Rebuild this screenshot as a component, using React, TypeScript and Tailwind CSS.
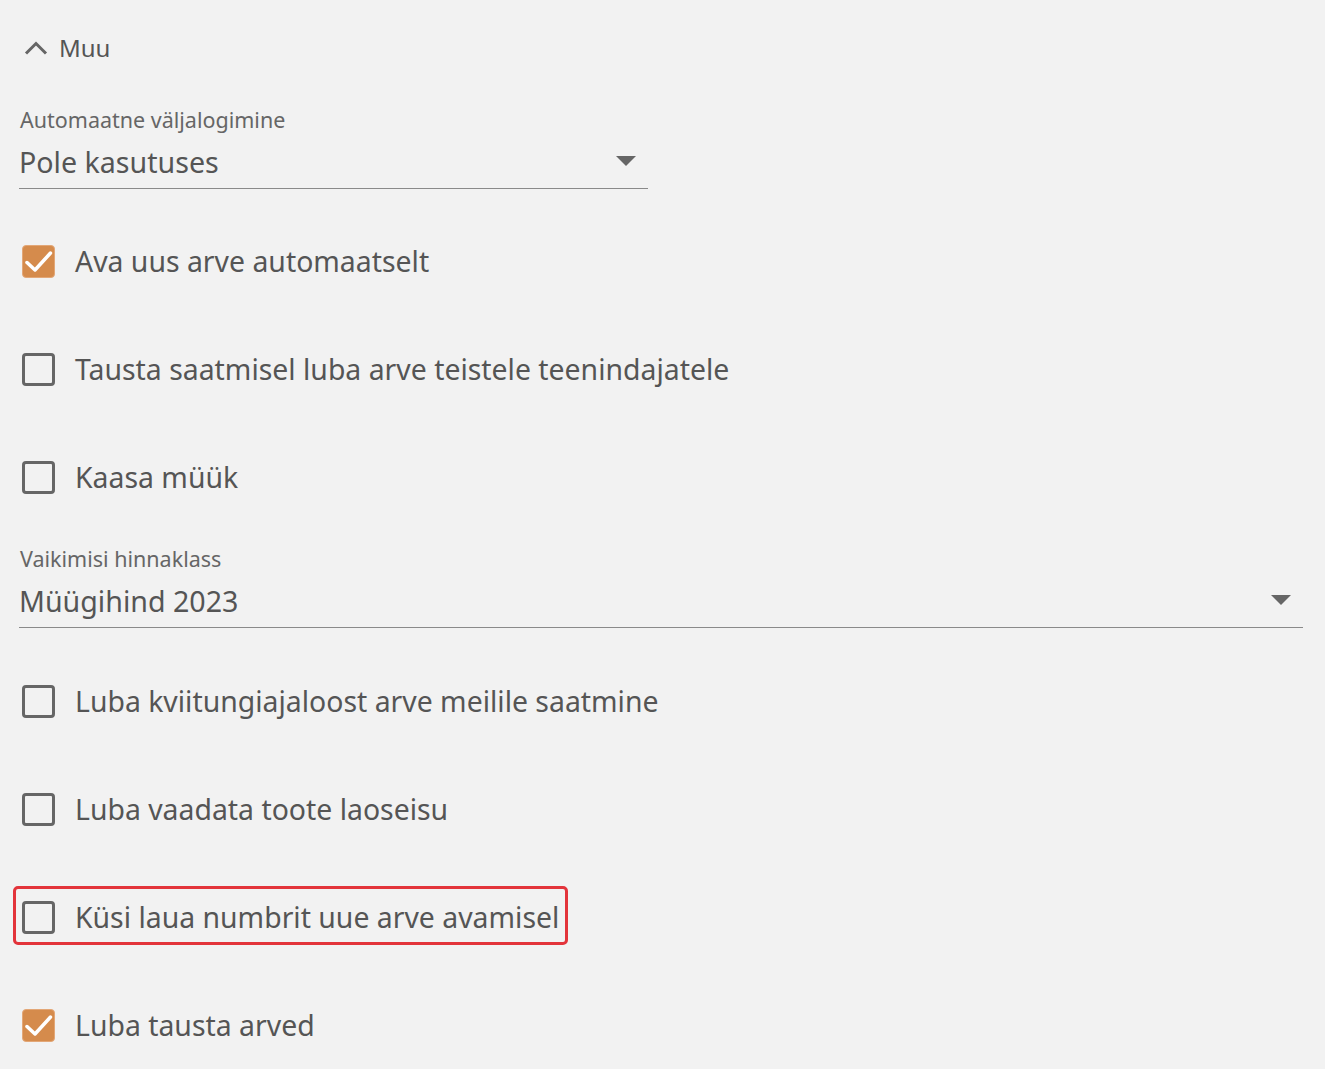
import React from "react";

const font = { fontFamily: '"Noto Sans", "Open Sans", sans-serif' };

function Checkbox({ checked }: { checked: boolean }) {
  if (checked) {
    return (
      <div className="w-[33px] h-[33px] rounded-[4px] bg-[#d58b4c] border border-[#e3a777] shrink-0">
        <svg width="33" height="33" viewBox="0 0 33 33" fill="none" className="-m-px">
          <path d="M5 17.5l8 7.5L28.5 8" stroke="#ffffff" strokeWidth="3.5" strokeLinecap="round" strokeLinejoin="round" />
        </svg>
      </div>
    );
  }
  return <div className="w-[33px] h-[33px] rounded-[4px] border-[3px] border-[#666666] shrink-0" />;
}

function Row({ label, checked, highlight }: { label: string; checked: boolean; highlight?: boolean }) {
  return (
    <div className="relative flex items-center h-[108px] pl-[3px]">
      <Checkbox checked={checked} />
      <span className="ml-[20px] text-[28.4px] leading-[36px] text-[#555555]">{label}</span>
      {highlight && (
        <div className="absolute left-[-6px] top-[23px] w-[555px] h-[59px] border-[3px] border-[#e3343b] rounded-[5px] pointer-events-none" />
      )}
    </div>
  );
}

function Select({ label, value, width }: { label: string; value: string; width: string }) {
  return (
    <div className={`pt-[15px] pb-[8px] border-b border-[#8a8a8a] ${width}`}>
      <div className="text-[21.5px] leading-[26px] text-[#666666] pl-[1px]">{label}</div>
      <div className="mt-[11px] flex items-center justify-between h-[36px]">
        <span className="text-[28.6px] leading-[36px] text-[#555555]">{value}</span>
        <svg width="20" height="10" viewBox="0 0 20 10" className="mr-[12px] -mt-[3px]">
          <path d="M0 0h20L10 10z" fill="#666666" />
        </svg>
      </div>
    </div>
  );
}

export default function App() {
  return (
    <div className="min-h-[1069px] w-[1325px] bg-[#f2f2f2] pl-[19px] pr-[22px] pt-[30px]" style={font}>
      <div className="flex items-center h-[36px]">
        <svg width="24" height="16" viewBox="0 0 24 16" className="ml-[5px]" fill="none">
          <path d="M2 13.5L12 3.5l10 10" stroke="#666666" strokeWidth="3" />
        </svg>
        <span className="ml-[11px] text-[24px] leading-[36px] text-[#555555]">Muu</span>
      </div>
      <div className="mt-[26px] mb-[18px]">
        <Select label="Automaatne väljalogimine" value="Pole kasutuses" width="w-[629px]" />
      </div>
      <Row label="Ava uus arve automaatselt" checked />
      <Row label="Tausta saatmisel luba arve teistele teenindajatele" checked={false} />
      <Row label="Kaasa müük" checked={false} />
      <div className="mb-[19px]">
        <Select label="Vaikimisi hinnaklass" value="Müügihind 2023" width="w-full" />
      </div>
      <Row label="Luba kviitungiajaloost arve meilile saatmine" checked={false} />
      <Row label="Luba vaadata toote laoseisu" checked={false} />
      <Row label="Küsi laua numbrit uue arve avamisel" checked={false} highlight />
      <Row label="Luba tausta arved" checked />
    </div>
  );
}
